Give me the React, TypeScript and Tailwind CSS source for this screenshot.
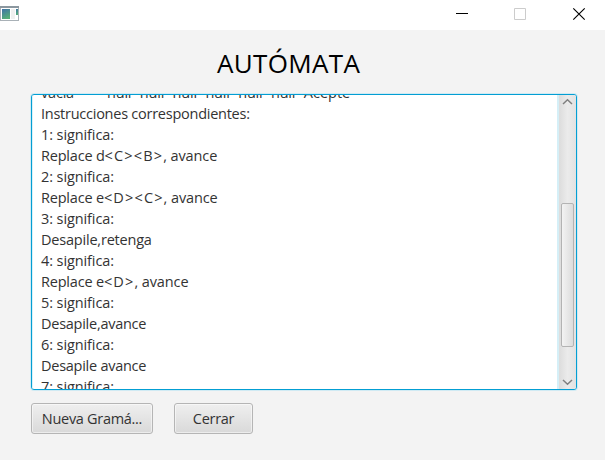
type Line = { text: string; cls: string; tags?: string; rest?: string };

const lines: Line[] = [
  { text: "Instrucciones correspondientes:", cls: "tracking-[-0.25px]" },
  { text: "1: significa:", cls: "tracking-[-0.1px]" },
  { text: "Replace d", cls: "tracking-[-0.2px]", tags: "<C><B>", rest: ", avance" },
  { text: "2: significa:", cls: "tracking-[-0.1px]" },
  { text: "Replace e", cls: "tracking-[-0.2px]", tags: "<D><C>", rest: ", avance" },
  { text: "3: significa:", cls: "tracking-[-0.1px]" },
  { text: "Desapile,retenga", cls: "tracking-[-0.2px]" },
  { text: "4: significa:", cls: "tracking-[-0.1px]" },
  { text: "Replace e", cls: "tracking-[-0.2px]", tags: "<D>", rest: ", avance" },
  { text: "5: significa:", cls: "tracking-[-0.1px]" },
  { text: "Desapile,avance", cls: "tracking-[-0.26px]" },
  { text: "6: significa:", cls: "tracking-[-0.1px]" },
  { text: "Desapile avance", cls: "tracking-[-0.26px]" },
  { text: "7: significa:", cls: "tracking-[-0.1px]" },
];

function TitleBar() {
  return (
    <header className="flex h-[30px] justify-between bg-white">
      <svg width="20" height="22" viewBox="0 0 20 22">
        <defs>
          <linearGradient id="app" x1="0" y1="0" x2="0.4" y2="1">
            <stop offset="0" stopColor="#3f72a8" />
            <stop offset="1" stopColor="#55ad79" />
          </linearGradient>
        </defs>
        <rect x="0" y="6" width="19" height="15" fill="#a9b1b7" />
        <rect x="0" y="6" width="19" height="2" fill="#8b979f" />
        <rect x="1" y="8" width="17" height="12" fill="#fff" />
        <rect x="2" y="9" width="8" height="10" fill="url(#app)" />
        <rect x="11" y="9" width="4" height="10" fill="#f0f0f0" />
        <rect x="16" y="9" width="2" height="6" fill="url(#app)" />
      </svg>
      <svg width="150" height="30" viewBox="0 0 150 30" fill="none">
        <path d="M1 13.5h12" stroke="#000" />
        <path d="M59.5 8.5h11v11h-11z" stroke="#ccc" />
        <path d="M118.3 8.3l11.4 11.4M129.7 8.3l-11.4 11.4" stroke="#000" strokeWidth="1.15" />
      </svg>
    </header>
  );
}

function ScrollBar() {
  return (
    <div className="flex w-[19px] shrink-0 flex-col items-center border-l-2 border-[#d5eff7] bg-linear-to-r from-[#dcdcdc] via-[#ebebeb] to-[#e2e2e2] pt-[3px] pb-[3px]">
      <svg width="11" height="8" viewBox="0 0 11 8" fill="none" stroke="#808080" strokeWidth="1.5">
        <path d="M1 6L5.5 1.8L10 6" />
      </svg>
      <div className="mt-[97px] h-[144px] w-[13px] rounded-[2px] border border-[#b3b3b3] bg-linear-to-r from-[#f3f3f3] to-[#dcdcdc]" />
      <svg className="mt-auto" width="11" height="8" viewBox="0 0 11 8" fill="none" stroke="#808080" strokeWidth="1.5">
        <path d="M1 2L5.5 6.2L10 2" />
      </svg>
    </div>
  );
}

const buttonStyle =
  "flex h-[31px] items-center justify-center rounded-[3px] border border-[#b5b5b5] bg-linear-to-b from-[#efefef] to-[#d9d9d9] text-[14.5px] shadow-[inset_0_0_0_1px_rgba(255,255,255,0.5)]";

export default function App() {
  return (
    <div className="h-[460px] w-[605px] overflow-hidden bg-[#f3f3f3] font-['Open_Sans','Noto_Sans',sans-serif] text-[#333]">
      <TitleBar />
      <h1 className="h-[64px] pt-[15px] pl-[217px] text-[26px] leading-[36px] tracking-[0.35px] text-black">
        AUTÓMATA
      </h1>
      <div className="ml-[31px] flex h-[296px] w-[546px] overflow-hidden rounded-[3px] border border-[#039ed3] bg-white shadow-[0_0_0_1px_#d0eaf3]">
        <div className="min-w-0 flex-1 overflow-hidden border-l border-[#d9f1f8] pl-[8px] text-[14.5px] leading-[21px] whitespace-pre">
          <div className="-mt-[13px] flex h-[21px] tracking-[-0.2px]">
            <span className="w-[66px]">vacía</span>
            {[0, 1, 2, 3, 4, 5].map((i) => (
              <span key={i} className="w-[32.8px]">null</span>
            ))}
            <span className="tracking-[0px]">Acepte</span>
          </div>
          {lines.map((line, i) => (
            <div key={i} className="h-[21px]">
              <span className={line.cls}>{line.text}</span>
              {line.tags && <span className="tracking-[1.15px]">{line.tags}</span>}
              {line.rest && <span className="tracking-[-0.1px]">{line.rest}</span>}
            </div>
          ))}
        </div>
        <ScrollBar />
      </div>
      <div className="mt-[13px] ml-[31px] flex gap-[21px]">
        <button className={`${buttonStyle} w-[122px]`}>
          <span className="tracking-[-0.3px]">Nueva Gramá...</span>
        </button>
        <button className={`${buttonStyle} w-[79px]`}>
          <span className="tracking-[-0.3px]">Cerrar</span>
        </button>
      </div>
    </div>
  );
}
